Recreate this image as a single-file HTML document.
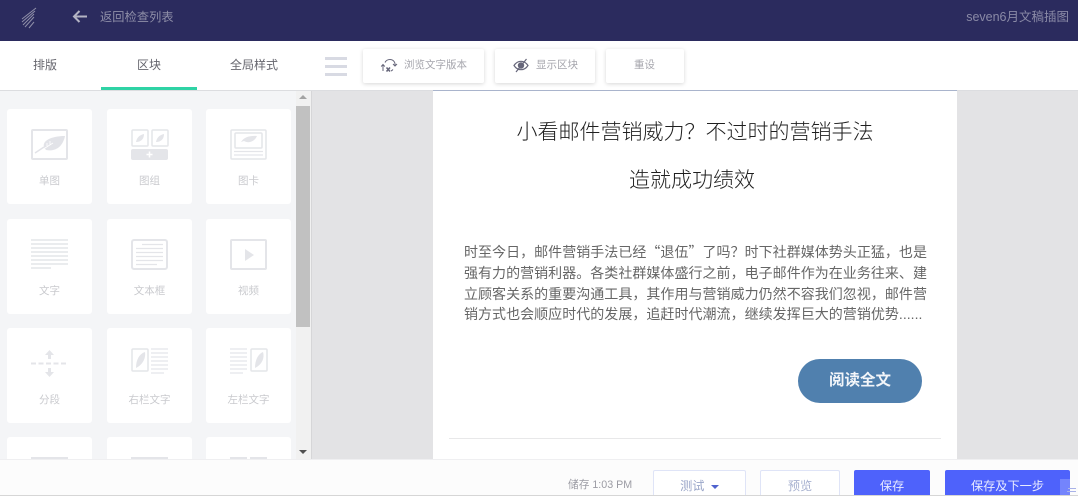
<!DOCTYPE html>
<html lang="zh">
<head>
<meta charset="utf-8">
<style>
html,body{margin:0;padding:0;width:1078px;height:496px;overflow:hidden;background:#fff}
body{font-family:"Liberation Sans","Noto Sans CJK SC",sans-serif}
#w{position:absolute;left:0;top:0;width:1078px;height:496px;overflow:hidden;background:#fff;filter:blur(.3px)}
.a{position:absolute;white-space:nowrap}
.c{text-align:center}
.card{position:absolute;width:85px;height:95px;background:#fff;border-radius:3px}
.card svg{position:absolute;left:24px;top:20px}
.card span{position:absolute;left:0;right:0;top:65px;text-align:center;font-size:10.500px;line-height:14px;color:#c9cace}
.tb{position:absolute;top:49px;height:34px;background:#fff;border-radius:2px;box-shadow:0 1px 4px rgba(0,0,0,.16)}
.tb span{position:absolute;top:0;line-height:33px;font-size:10.500px;color:#a9a9b0}
.f{position:absolute;top:470px;height:26px;padding-top:7px;overflow:hidden;box-sizing:border-box;border-radius:2px 2px 0 0;text-align:center;font-size:12.200px;line-height:19px}
.o{padding-top:6px;border:1px solid #dfe4f7;border-bottom:0;background:#fff}
</style>
</head>
<body>
<div id="w">
<div class="a" style="left:0;top:0;width:1078px;height:41px;background:#2b2b5e"></div>
<svg class="a" style="left:20px;top:6px" width="18" height="23" viewBox="0 0 18 23" fill="none" stroke="#8f8fa8" stroke-width="1"><path d="M2 13L16 2M2 16L15 5M3 19L14 8M5 21L14 11M9 22L14 16"/></svg>
<svg class="a" style="left:72px;top:10px" width="15" height="13" viewBox="0 0 15 13" fill="none" stroke="#b4b4c4" stroke-width="2"><path d="M15 6.500H2M7.500 1L2 6.500L7.500 12"/></svg>
<div class="a" style="left:100px;top:9px;font-size:12.200px;line-height:17px;letter-spacing:.1px;color:#8f8fa8">返回检查列表</div>
<div class="a" style="right:9px;top:9px;font-size:12.500px;line-height:17px;color:#8a8aa6">seven6月文稿插图</div>

<div class="a" style="left:0;top:41px;width:1078px;height:49px;background:#fff"></div>
<div class="a" style="left:0;top:90px;width:1078px;height:1px;background:#dcdde0"></div>
<div class="a c" style="left:0;top:57px;width:90px;font-size:12px;line-height:17px;color:#66666e">排版</div>
<div class="a c" style="left:101px;top:57px;width:96px;font-size:12px;line-height:17px;color:#66666e">区块</div>
<div class="a c" style="left:210px;top:57px;width:88px;font-size:12px;line-height:17px;color:#66666e">全局样式</div>
<div class="a" style="left:101px;top:87px;width:96px;height:3px;background:#2fd3a5"></div>
<div class="a" style="left:325px;top:57px;width:22px;height:3px;background:#d8dae3"></div>
<div class="a" style="left:325px;top:65px;width:22px;height:3px;background:#d8dae3"></div>
<div class="a" style="left:325px;top:73px;width:22px;height:3px;background:#d8dae3"></div>

<div class="tb" style="left:363px;width:121px">
<svg class="a" style="left:17px;top:8px" width="18" height="18" viewBox="0 0 18 18" fill="none" stroke="#66667a" stroke-width="1"><path d="M5 5.500C6 3.500 8 2.500 10 2.500C13 2.500 15.500 5 15 8.500M13 7L15 9L17 7M3 14V7.500M1.200 9.500L3 7.500L4.800 9.500M13 12.500C12 13.500 11.500 13.800 11 14"/><path d="M6.500 10.500L10 14.500M10 10.500L6.500 14.500" stroke-width="1.600"/></svg>
<span style="left:41px;color:#a6a6ad">浏览文字版本</span></div>
<div class="tb" style="left:495px;width:100px">
<svg class="a" style="left:18px;top:9px" width="16" height="15" viewBox="0 0 16 15" fill="none" stroke="#66667a" stroke-width="1.200"><path d="M1 7.500C3 4.500 5.500 3.300 8 3.300S13 4.500 15 7.500C13 10.500 10.500 11.700 8 11.700S3 10.500 1 7.500Z"/><circle cx="8" cy="7.500" r="2.600" fill="#66667a"/><path d="M13.500 1L3 14"/></svg>
<span style="left:41px;color:#a6a6ad">显示区块</span></div>
<div class="tb" style="left:606px;width:78px"><span style="left:28px;color:#a6a6ad">重设</span></div>

<div class="a" style="left:0;top:91px;width:311px;height:368px;background:#f4f5f7"></div>
<div class="a" style="left:311px;top:91px;width:767px;height:368px;background:#e3e3e5"></div>
<div class="a" style="left:311px;top:91px;width:1px;height:368px;background:#d6d6d8"></div>
<div class="a" style="left:433px;top:91px;width:524px;height:368px;background:#fff"></div>
<div class="a" style="left:433px;top:90px;width:524px;height:1px;background:#a9b4cc"></div>

<div class="a" style="left:296px;top:91px;width:15px;height:368px;background:#f1f1f1"></div>
<div class="a" style="left:296px;top:106px;width:14px;height:221px;background:#c1c1c1"></div>
<div class="a" style="left:299px;top:95px;width:0;height:0;border-left:4px solid transparent;border-right:4px solid transparent;border-bottom:4px solid #a3a3a3"></div>
<div class="a" style="left:299px;top:450px;width:0;height:0;border-left:4px solid transparent;border-right:4px solid transparent;border-top:4px solid #505050"></div>

<div class="card" style="left:7px;top:109px"><svg width="38" height="32" viewBox="0 0 38 32" fill="none"><rect x="1" y="1" width="35" height="29" rx="1" stroke="#e4e5e9" stroke-width="2"/><path d="M13 18C11 12 20 7 34 7C32 17 25 23 15 21Z" fill="#e2e3e8"/><path d="M4 24L13 18" stroke="#e2e3e8" stroke-width="1.500"/><path d="M14 19L22 14M16 17V14M19 15.500V12" stroke="#fff" stroke-width=".8"/></svg><span>单图</span></div>
<div class="card" style="left:107px;top:109px"><svg width="38" height="32" viewBox="0 0 38 32" fill="none"><rect x="1" y="1" width="16" height="16" rx="1" stroke="#e4e5e9" stroke-width="1.500"/><rect x="21" y="1" width="16" height="16" rx="1" stroke="#e4e5e9" stroke-width="1.500"/><path d="M5 13C6 8 9 6 13 5C13 10 10 13 5 13ZM25 13C26 8 29 6 33 5C33 10 30 13 25 13Z" fill="#e4e5e9"/><rect y="20" width="37" height="11" rx="2" fill="#e4e5e9"/><path d="M18.500 22.500V28.500M15.500 25.500H21.500" stroke="#fff" stroke-width="1.500"/></svg><span>图组</span></div>
<div class="card" style="left:206px;top:109px"><svg width="38" height="32" viewBox="0 0 38 32" fill="none" stroke="#e4e5e9"><rect x="1" y="1" width="35" height="29" rx="1" stroke-width="1.500"/><rect x="5" y="4" width="27" height="15" rx="1" stroke-width="1.500"/><path d="M11 13C14 8 20 6.500 27 7C25 12 19 15 14 12Z" fill="#e4e5e9" stroke="none"/><path d="M4 22.500H33M4 26H33" stroke-width="1.200"/></svg><span>图卡</span></div>

<div class="card" style="left:7px;top:219px"><svg width="38" height="32" viewBox="0 0 38 32" fill="none" stroke="#e4e5e9" stroke-width="1.500"><path d="M0 1H37M0 5H37M0 9H37M0 13H37M0 17H37M0 21H37M0 25H37M0 29H20"/></svg><span>文字</span></div>
<div class="card" style="left:107px;top:219px"><svg width="38" height="32" viewBox="0 0 38 32" fill="none" stroke="#e4e5e9"><rect x="1" y="1" width="35" height="29" rx="2" stroke-width="2"/><path d="M11 5.500H32M5 9.500H32M5 13.500H32M5 17.500H32M5 21.500H32M5 25.500H26" stroke-width="1.300"/></svg><span>文本框</span></div>
<div class="card" style="left:206px;top:219px"><svg width="38" height="32" viewBox="0 0 38 32" fill="none"><rect x="1" y="1" width="35" height="29" rx="1" stroke="#e4e5e9" stroke-width="2"/><path d="M15 10L24 16L15 22Z" fill="#e4e5e9"/></svg><span>视频</span></div>

<div class="card" style="left:7px;top:328px"><svg width="38" height="32" viewBox="0 0 38 32" fill="none"><path d="M0 15.500H37" stroke="#e4e5e9" stroke-width="2" stroke-dasharray="5 2.500"/><path d="M18.500 2L23 7H20V11H17V7H14Z M18.500 29L23 24H20V20H17V24H14Z" fill="#e4e5e9"/></svg><span>分段</span></div>
<div class="card" style="left:107px;top:328px"><svg width="38" height="32" viewBox="0 0 38 32" fill="none" stroke="#e4e5e9"><rect x="1" y="1" width="16" height="22" rx="1" stroke-width="1.500"/><path d="M5 20C5 12 8 6 14 4C15 11 11 17 5 20Z" fill="#e4e5e9" stroke="none"/><path d="M20 1H37M20 5H37M20 9H37M20 13H37M20 17H37M20 21H37M20 25H33" stroke-width="1.300"/></svg><span>右栏文字</span></div>
<div class="card" style="left:206px;top:328px"><svg width="38" height="32" viewBox="0 0 38 32" fill="none" stroke="#e4e5e9"><rect x="21" y="1" width="16" height="22" rx="1" stroke-width="1.500"/><path d="M25 20C25 12 28 6 33 4C35 11 31 17 25 20Z" fill="#e4e5e9" stroke="none"/><path d="M0 1H17M0 5H17M0 9H17M0 13H17M0 17H17M0 21H17M0 25H13" stroke-width="1.300"/></svg><span>左栏文字</span></div>

<div class="card" style="left:7px;top:437px;height:22px;border-radius:3px 3px 0 0"><svg width="38" height="2" viewBox="0 0 38 2"><rect width="37" height="2" fill="#e4e5e9"/></svg></div>
<div class="card" style="left:107px;top:437px;height:22px;border-radius:3px 3px 0 0"><svg width="38" height="2" viewBox="0 0 38 2"><rect width="37" height="2" fill="#e4e5e9"/></svg></div>
<div class="card" style="left:206px;top:437px;height:22px;border-radius:3px 3px 0 0"><svg width="38" height="2" viewBox="0 0 38 2"><rect width="17" height="2" fill="#e4e5e9"/><rect x="20" width="17" height="2" fill="#e4e5e9"/></svg></div>

<div class="a c" style="left:433px;top:118px;width:524px;font-size:21px;line-height:30px;color:#1f1f1f;font-weight:300">小看邮件营销威力？不过时的营销手法</div>
<div class="a c" style="left:433px;top:166px;width:518px;font-size:21px;line-height:30px;color:#1f1f1f;font-weight:300">造就成功绩效</div>
<div class="a" style="left:464px;top:242px;font-size:14px;line-height:20.800px;color:#666;letter-spacing:.03px">时至今日，邮件营销手法已经<span style="font-family:'Noto Sans CJK SC',sans-serif">“</span>退伍<span style="font-family:'Noto Sans CJK SC',sans-serif">”</span>了吗？时下社群媒体势头正猛，也是<br>强有力的营销利器。各类社群媒体盛行之前，电子邮件作为在业务往来、建<br>立顾客关系的重要沟通工具，其作用与营销威力仍然不容我们忽视，邮件营<br>销方式也会顺应时代的发展，追赶时代潮流，继续发挥巨大的营销优势......</div>
<div class="a c" style="left:798px;top:359px;width:124px;height:44px;border-radius:22px;background:#5080ae;color:#f2f5f9;font-size:15.500px;font-weight:700;line-height:44px">阅读全文</div>
<div class="a" style="left:449px;top:438px;width:492px;height:1px;background:#e8e8e9"></div>

<div class="a" style="left:0;top:459px;width:1078px;height:36px;background:#fcfcfc;border-top:1px solid #efeff1;box-sizing:border-box"></div>
<div class="a" style="left:568px;top:478px;font-size:10.700px;line-height:14px;color:#9b9ba3">储存 1:03 PM</div>
<div class="f o" style="left:653px;width:93px;color:#9aa6c8">测试 <span style="display:inline-block;width:0;height:0;margin-left:3px;vertical-align:1px;border-left:4px solid transparent;border-right:4px solid transparent;border-top:4px solid #4f62ce"></span></div>
<div class="f o" style="left:760px;width:80px;color:#a8b2d0">预览</div>
<div class="f" style="left:854px;width:76px;background:#4e62fb;color:#e8ebff">保存</div>
<div class="f" style="left:945px;width:125px;background:#4e62fb;color:#e8ebff">保存及下一步</div>
<div class="a" style="left:1060px;top:479px;width:18px;height:17px;background:rgba(255,255,255,.22)"></div>
<div class="a" style="left:1068px;top:488px;width:8px;height:1px;background:#a9b2e8"></div>
<div class="a" style="left:1067px;top:491px;width:9px;height:1px;background:#a9b2e8"></div>
<div class="a" style="left:0;top:495px;width:1078px;height:1px;background:#d6d6d6"></div>
</div>
</body>
</html>
